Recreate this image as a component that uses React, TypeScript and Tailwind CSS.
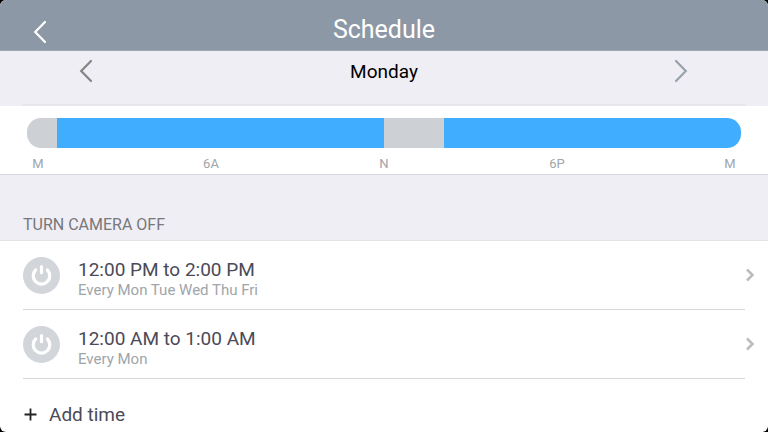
import { useState } from "react";

type Segment = { hours: string; color: string };

const segments: Segment[] = [
  { hours: "grow-1", color: "bg-[#cdd1d6]" },
  { hours: "grow-11", color: "bg-[#40adff]" },
  { hours: "grow-2", color: "bg-[#cdd1d6]" },
  { hours: "grow-10", color: "bg-[#40adff]" },
];

const ticks = ["M", "6A", "N", "6P", "M"];

const entries = [
  { time: "12:00 PM to 2:00 PM", days: "Every Mon Tue Wed Thu Fri" },
  { time: "12:00 AM to 1:00 AM", days: "Every Mon" },
];

const week = ["Monday", "Tuesday", "Wednesday", "Thursday", "Friday", "Saturday", "Sunday"];

function Chevron({ direction }: { direction: "left" | "right" }) {
  return (
    <svg width="14" height="24" viewBox="0 0 14 24" fill="none" stroke="currentColor" strokeWidth="2.2" strokeLinecap="round" aria-hidden="true">
      <path d={direction === "left" ? "M12 2 2.2 12 12 22" : "M1 2l9.8 10L1 22"} />
    </svg>
  );
}

function PowerBadge() {
  return (
    <svg width="37" height="37" viewBox="0 0 37 37" fill="none" aria-hidden="true">
      <circle cx="18.5" cy="18.5" r="18.5" fill="#d2d5da" />
      <path d="M12.6 13a8.3 8.3 0 1 0 11.8 0" stroke="#fff" strokeWidth="3.2" strokeLinecap="round" />
      <path d="M18.5 9.5v6.2" stroke="#fff" strokeWidth="3.2" strokeLinecap="round" />
    </svg>
  );
}

export default function App() {
  const [day, setDay] = useState(0);
  const shift = (step: number) => setDay((day + step + 7) % 7);

  return (
    <div className="min-h-screen bg-black">
      <div className="flex min-h-screen flex-col overflow-hidden rounded-md bg-white font-['Roboto',sans-serif] text-[#4a4a58]">
        <header className="grid grid-cols-[1fr_auto_1fr] items-center border-b border-[#9ba6b3] bg-[#8d98a6] px-8 pt-[11px] pb-px text-white">
          <button type="button" aria-label="Back" className="flex h-[38px] w-4 items-center justify-center pt-1">
            <Chevron direction="left" />
          </button>
          <h1 className="text-[25px] leading-8">Schedule</h1>
        </header>

        <section className="bg-[#efeef4]">
          <div className="flex h-[53px] items-start justify-between px-[79px] pt-2">
            <button type="button" aria-label="Previous day" onClick={() => shift(-1)} className="text-[#858585]">
              <Chevron direction="left" />
            </button>
            <h2 className="text-[19px] leading-[26px] text-black">{week[day]}</h2>
            <button type="button" aria-label="Next day" onClick={() => shift(1)} className="text-[#98a2ac]">
              <Chevron direction="right" />
            </button>
          </div>
          <div className="mx-[23px] border-b-2 border-[#e7e7eb]" />
        </section>

        <section className="border-b border-[#d6d6da] px-[27px] pt-3">
          <div className="flex h-[30px] overflow-hidden rounded-[14px]">
            {segments.map((s, i) => (
              <div key={i} className={`basis-0 ${s.hours} ${s.color}`} />
            ))}
          </div>
          <div className="-mx-px flex justify-between pt-2 pb-0.5 text-[13px] leading-4 text-[#a0a5ab]">
            {ticks.map((t, i) => (
              <span key={i} className="w-6 text-center">{t}</span>
            ))}
          </div>
        </section>

        <h3 className="border-b border-[#e2e2e7] bg-[#efeef4] px-[23px] pt-10 pb-[5px] text-base leading-5 text-[#77777c]">
          TURN CAMERA OFF
        </h3>

        <ul className="pl-[23px]">
          {entries.map((e) => (
            <li key={e.time}>
              <button type="button" className="flex h-[68px] w-full items-center pr-[13px] text-left">
                <PowerBadge />
                <span className="ml-[18px] flex grow flex-col pt-1.5">
                  <span className="text-[19px] leading-6">{e.time}</span>
                  <span className="text-[15px] leading-4 text-[#a0a5a9]">{e.days}</span>
                </span>
                <svg width="10" height="14" viewBox="0 0 10 14" fill="none" stroke="#babcbf" strokeWidth="2.5" aria-hidden="true">
                  <path d="M2 1.5 7.5 7 2 12.5" />
                </svg>
              </button>
              <div className="mr-[23px] border-b border-[#d6d7da]" />
            </li>
          ))}
        </ul>

        <button type="button" className="flex h-[53px] items-center gap-3 px-6 pt-[18px] text-left text-[19px] leading-6">
          <svg width="13" height="13" viewBox="0 0 13 13" stroke="#222" strokeWidth="1.8" aria-hidden="true">
            <path d="M6.5 0.5v12M0.5 6.5h12" />
          </svg>
          Add time
        </button>
      </div>
    </div>
  );
}
